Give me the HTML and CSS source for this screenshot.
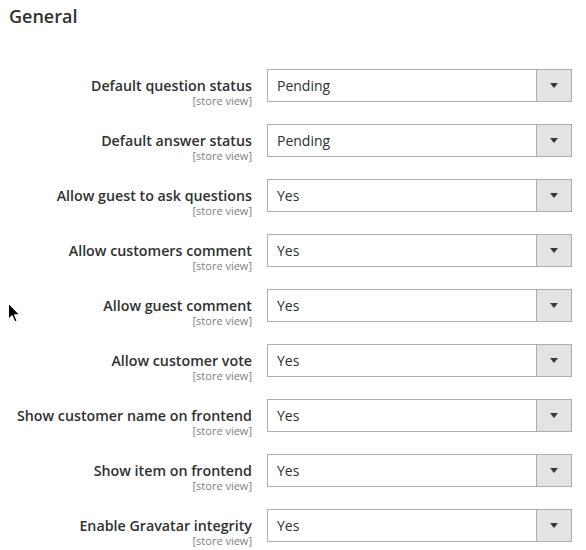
FILE: index.html
```html
<!DOCTYPE html>
<html>
<head>
<meta charset="utf-8">
<link rel="stylesheet" href="styles.css">
</head>
<body>
<div class="page">
  <h2 class="title">General</h2>
  <div class="fields">
    <div class="row">
      <div class="label"><span class="name">Default question status</span><span class="scope">[store view]</span></div>
      <div class="select"><span class="value">Pending</span><span class="arrow"><i></i></span></div>
    </div>
    <div class="row">
      <div class="label"><span class="name">Default answer status</span><span class="scope">[store view]</span></div>
      <div class="select"><span class="value">Pending</span><span class="arrow"><i></i></span></div>
    </div>
    <div class="row">
      <div class="label"><span class="name">Allow guest to ask questions</span><span class="scope">[store view]</span></div>
      <div class="select"><span class="value">Yes</span><span class="arrow"><i></i></span></div>
    </div>
    <div class="row">
      <div class="label"><span class="name">Allow customers comment</span><span class="scope">[store view]</span></div>
      <div class="select"><span class="value">Yes</span><span class="arrow"><i></i></span></div>
    </div>
    <div class="row">
      <div class="label"><span class="name">Allow guest comment</span><span class="scope">[store view]</span></div>
      <div class="select"><span class="value">Yes</span><span class="arrow"><i></i></span></div>
    </div>
    <div class="row">
      <div class="label"><span class="name">Allow customer vote</span><span class="scope">[store view]</span></div>
      <div class="select"><span class="value">Yes</span><span class="arrow"><i></i></span></div>
    </div>
    <div class="row">
      <div class="label"><span class="name">Show customer name on frontend</span><span class="scope">[store view]</span></div>
      <div class="select"><span class="value">Yes</span><span class="arrow"><i></i></span></div>
    </div>
    <div class="row">
      <div class="label"><span class="name">Show item on frontend</span><span class="scope">[store view]</span></div>
      <div class="select"><span class="value">Yes</span><span class="arrow"><i></i></span></div>
    </div>
    <div class="row">
      <div class="label"><span class="name">Enable Gravatar integrity</span><span class="scope">[store view]</span></div>
      <div class="select"><span class="value">Yes</span><span class="arrow"><i></i></span></div>
    </div>
  </div>
  <svg class="cursor" width="13" height="20" viewBox="0 0 13 20"><path d="M0.5 0.5 L0.5 16 L4.2 12.6 L6.8 18.8 L9 17.8 L6.5 11.8 L11.5 11.8 Z" fill="#000" stroke="#fff" stroke-width="1"/></svg>
</div>
</body>
</html>
```
FILE: styles.css
```css
html, body {
  margin: 0;
  padding: 0;
  background: #fff;
}
.page {
  position: relative;
  width: 586px;
  height: 550px;
  font-family: "Open Sans", "Liberation Sans", sans-serif;
  color: #303030;
}
.title {
  margin: 0;
  padding: 4px 0 0 9px;
  font-size: 18px;
  font-weight: 600;
  line-height: 25px;
  color: #303030;
}
.fields {
  display: flex;
  flex-direction: column;
  gap: 22px;
  padding-top: 40px;
}
.row {
  display: grid;
  grid-template-columns: 252px 305px;
  column-gap: 15px;
  height: 33px;
}
.label {
  display: flex;
  flex-direction: column;
  align-items: flex-end;
  padding-top: 7px;
}
.name {
  font-size: 14.25px;
  font-weight: 600;
  line-height: 19px;
}
.scope {
  font-size: 11px;
  line-height: 12px;
  color: #808080;
}
.select {
  display: flex;
  border: 1px solid #adadad;
  box-sizing: border-box;
  height: 33px;
  background: #fff;
}
.value {
  flex: 1;
  padding-left: 9px;
  font-size: 14px;
  line-height: 31px;
}
.arrow {
  width: 34px;
  background: #e3e3e3;
  border-left: 1px solid #adadad;
  display: flex;
  align-items: center;
  justify-content: center;
}
.arrow i {
  width: 0;
  height: 0;
  border-left: 4px solid transparent;
  border-right: 4px solid transparent;
  border-top: 5px solid #41362f;
}
.cursor {
  position: absolute;
  left: 8px;
  top: 303px;
}
```
